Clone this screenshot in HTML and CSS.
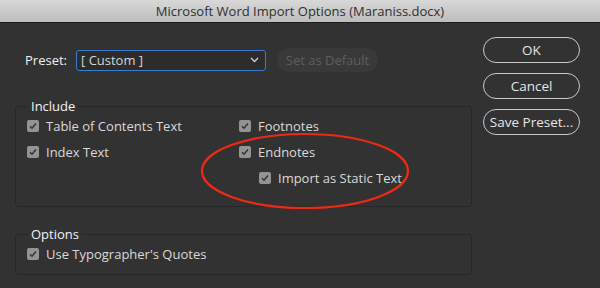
FILE: index.html
```html
<!DOCTYPE html>
<html lang="en">
<head>
  <meta charset="UTF-8" />
  <title>Microsoft Word Import Options</title>
  <link rel="stylesheet" href="styles.css">
</head>
<body>
  <div class="window">
    <div class="titlebar">Microsoft Word Import Options (Maraniss.docx)</div>

    <div class="dialog">
      <div class="main">
        <div class="preset-row">
          <label class="preset-label">Preset:</label>
          <div class="select">
            <span>[ Custom ]</span>
            <svg class="chevron" width="9" height="6" viewBox="0 0 9 6"><path d="M1 1l3.5 3.5L8 1" fill="none" stroke="#cfcfcf" stroke-width="1.3"/></svg>
          </div>
          <button class="btn-flat" disabled>Set as Default</button>
        </div>

        <fieldset class="group include">
          <legend>Include</legend>
          <div class="grid">
            <label class="check"><span class="box"><svg width="12" height="12" viewBox="0 0 12 12"><path d="M3 6.2l2 2 4-4.6" fill="none" stroke="#333" stroke-width="1.5"/></svg></span>Table of Contents Text</label>
            <label class="check"><span class="box"><svg width="12" height="12" viewBox="0 0 12 12"><path d="M3 6.2l2 2 4-4.6" fill="none" stroke="#333" stroke-width="1.5"/></svg></span>Footnotes</label>
            <label class="check"><span class="box"><svg width="12" height="12" viewBox="0 0 12 12"><path d="M3 6.2l2 2 4-4.6" fill="none" stroke="#333" stroke-width="1.5"/></svg></span>Index Text</label>
            <label class="check"><span class="box"><svg width="12" height="12" viewBox="0 0 12 12"><path d="M3 6.2l2 2 4-4.6" fill="none" stroke="#333" stroke-width="1.5"/></svg></span>Endnotes</label>
            <span></span>
            <label class="check sub"><span class="box"><svg width="12" height="12" viewBox="0 0 12 12"><path d="M3 6.2l2 2 4-4.6" fill="none" stroke="#333" stroke-width="1.5"/></svg></span>Import as Static Text</label>
          </div>
        </fieldset>

        <fieldset class="group options">
          <legend>Options</legend>
          <label class="check"><span class="box"><svg width="12" height="12" viewBox="0 0 12 12"><path d="M3 6.2l2 2 4-4.6" fill="none" stroke="#333" stroke-width="1.5"/></svg></span>Use Typographer's Quotes</label>
        </fieldset>
      </div>

      <div class="actions">
        <button class="btn">OK</button>
        <button class="btn">Cancel</button>
        <button class="btn">Save Preset...</button>
      </div>
    </div>

    <!-- red callout drawn over the dialog -->
    <svg class="callout" width="220" height="84" viewBox="0 0 220 84">
      <ellipse cx="110" cy="42" rx="103" ry="37" fill="none" stroke="#ee2a16" stroke-width="2.2"/>
    </svg>
  </div>
</body>
</html>
```

FILE: styles.css
```css
* {
  box-sizing: border-box;
  margin: 0;
  padding: 0;
}

body {
  font-family: 'Open Sans', 'DejaVu Sans', sans-serif;
  font-size: 13px;
  background-color: #323232;
  color: #dcdcdc;
  width: 600px;
  height: 288px;
  overflow: hidden;
}

.window {
  position: relative;
  height: 100%;
}

.titlebar {
  height: 23px;
  line-height: 22px;
  text-align: center;
  font-size: 13px;
  color: #2e2e2e;
  background: linear-gradient(#d8d8d8, #bdbdbd);
  border-bottom: 1px solid #1e1e1e;
}

.dialog {
  display: flex;
  padding-top: 14px;
}

.main {
  width: 472px;
  padding-left: 15px;
}

.preset-row {
  display: flex;
  align-items: center;
  margin-top: 11px;
  padding-left: 10px;
  height: 24px;
}

.preset-label {
  color: #f0f0f0;
  width: 51px;
}

.select {
  width: 190px;
  height: 21px;
  border: 1.5px solid #3b7bd0;
  border-radius: 3px;
  background-color: #2c2c2c;
  display: flex;
  align-items: center;
  justify-content: space-between;
  padding: 0 6px 0 4px;
  color: #d6d6d6;
}

.btn-flat {
  margin-left: 11px;
  width: 101px;
  height: 24px;
  border: none;
  border-radius: 12px;
  background-color: #393939;
  color: #5e5e5e;
  font: inherit;
}

.group {
  border: 1px solid #272727;
  border-radius: 3px;
  padding: 3px 11px 0 11px;
}

.group legend {
  margin-left: 1px;
  padding: 0 3px;
  color: #f2f2f2;
  line-height: 16px;
}

.include {
  margin-top: 26px;
  height: 109px;
}

.options {
  margin-top: 19px;
  height: 49px;
}

.grid {
  display: grid;
  grid-template-columns: 212px 1fr;
  row-gap: 8px;
}

.check {
  display: flex;
  align-items: center;
  height: 18px;
  color: #dadada;
}

.check.sub {
  padding-left: 20px;
}

.box {
  width: 12px;
  height: 12px;
  border-radius: 2px;
  background-color: #939393;
  margin-right: 7px;
  display: flex;
}

.actions {
  display: flex;
  flex-direction: column;
  gap: 10px;
  margin-left: 11px;
}

.btn {
  width: 97px;
  height: 26px;
  border: 1.5px solid #c8c8c8;
  border-radius: 13px;
  background: transparent;
  color: #e6e6e6;
  font: inherit;
  font-size: 13.5px;
}

.callout {
  position: absolute;
  left: 195px;
  top: 129px;
}
```
